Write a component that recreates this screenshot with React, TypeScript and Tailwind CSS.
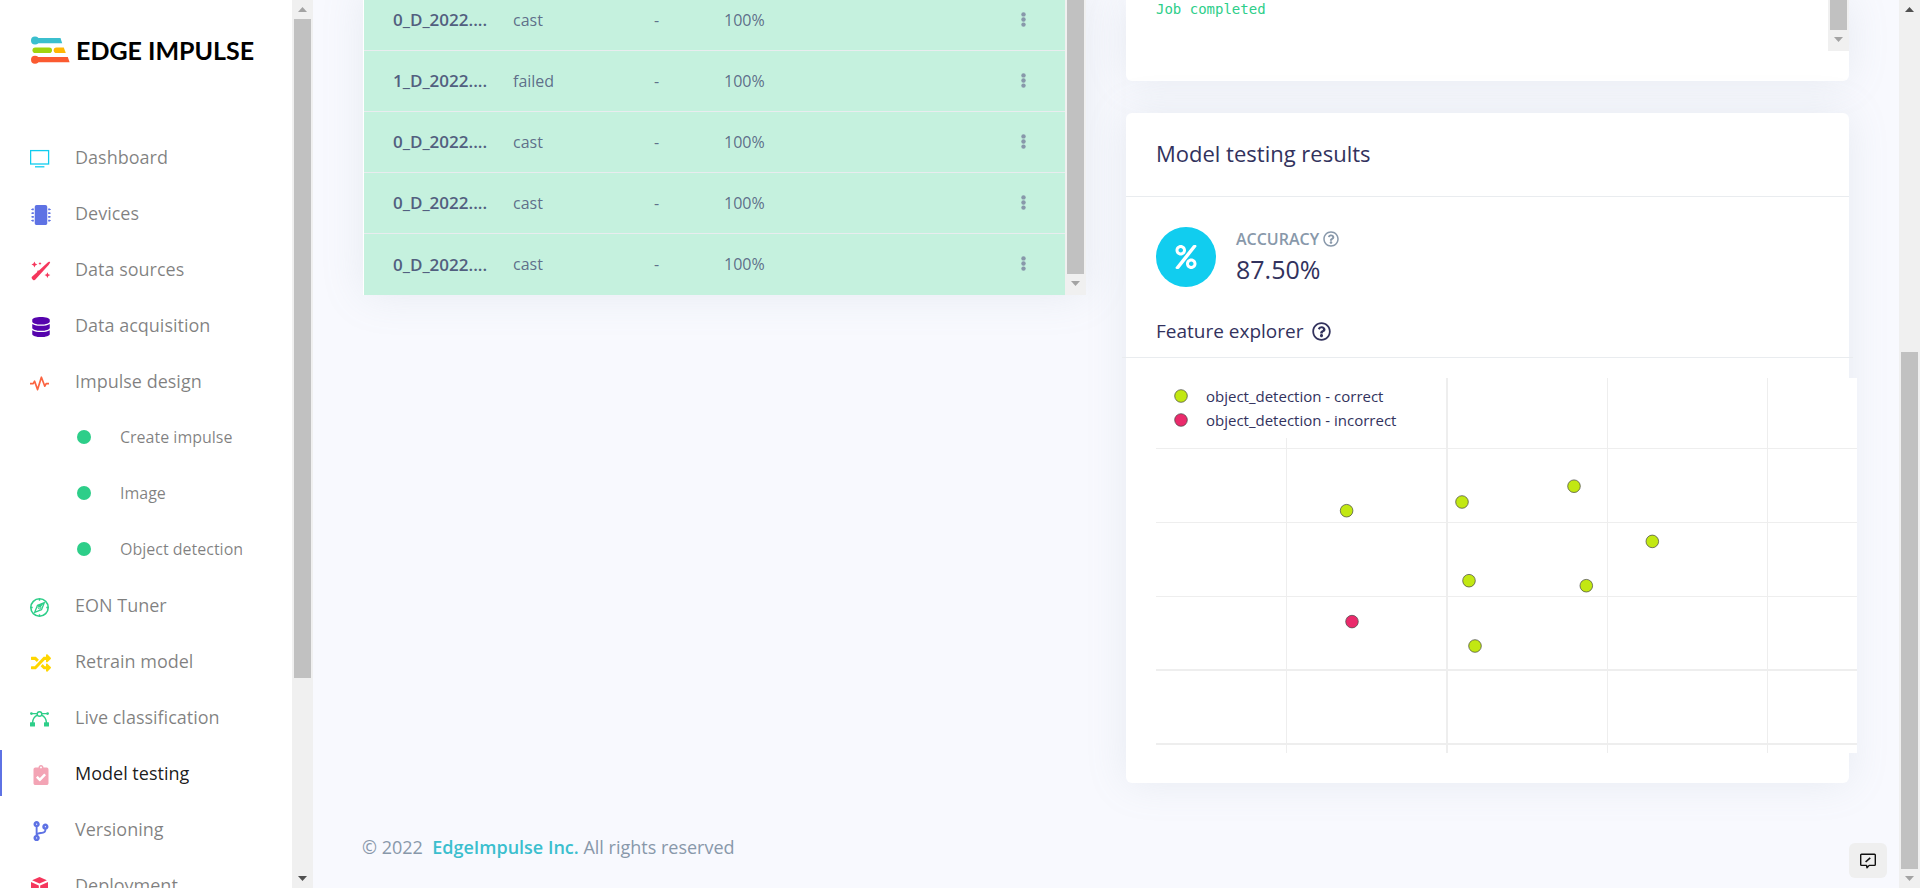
import React from 'react';
import {
  FaCodeBranch,
  FaClipboardCheck,
  FaDatabase,
  FaMicrochip,
  FaPercent,
  FaRandom,
  FaRegQuestionCircle,
} from 'react-icons/fa';

const ScreenIcon = () => (
  <svg viewBox="0 0 20 20" className="h-5 w-5 -ml-px" fill="none" stroke="#11cdef">
    <rect x="0.6" y="1.6" width="18" height="13.4" strokeWidth="1.3" />
    <path d="M5 17.8h9.4" strokeWidth="1.3" />
  </svg>
);

const WandIcon = () => (
  <svg viewBox="0 0 20 20" className="h-5 w-5" fill="#f5365c">
    <path d="M18.2.6l1 .9-1.6 2.4L4.4 18.6a1.7 1.7 0 01-2.5.1l-.7-.7a1.7 1.7 0 010-2.4L6 11.2l.6-1.6 1.4-.2 8.4-7.7z" />
    <path d="M3.4.6l.9 2 2 .9-2 .9-.9 2-.9-2-2-.9 2-.9z" />
    <path d="M9 1l.5 1.1 1.1.5-1.1.5L9 4.2l-.5-1.1-1.1-.5 1.1-.5z" />
    <path d="M16.4 11.2l.9 2 2 .9-2 .9-.9 2-.9-2-2-.9 2-.9z" />
  </svg>
);

const PulseIcon = () => (
  <svg viewBox="0 0 20 20" className="h-5 w-5 -ml-px" fill="none" stroke="#fb6340" strokeWidth="1.7">
    <path d="M0 10.6h3.2l1.4-2.4 3 8.4 3.8-12.4 3.4 9 1.4-2.6H19" strokeLinejoin="round" />
  </svg>
);

const CompassIcon = () => (
  <svg viewBox="0 0 20 20" className="h-5 w-5 -ml-px" fill="none" stroke="#2dce89">
    <circle cx="9.5" cy="10.5" r="8.7" strokeWidth="1.6" />
    <path d="M9.5 1.7v2M9.5 17.3v2M.7 10.5h2M16.3 10.5h2" strokeWidth="1.4" />
    <path d="M14.4 5.6l-2.8 7-7 2.8 2.8-7z" strokeWidth="1.3" strokeLinejoin="round" />
    <path d="M14.4 5.6l-7 2.8 2.6 2.6z" fill="#2dce89" stroke="none" />
    <circle cx="9.5" cy="10.5" r="1.4" strokeWidth="1" />
  </svg>
);

const CurveIcon = () => (
  <svg viewBox="0 0 20 20" className="h-5 w-5 -ml-px" fill="none" stroke="#2dce89" strokeWidth="1.4">
    <circle cx="9.5" cy="5" r="2.3" />
    <path d="M1.5 4.6h5.7M11.8 4.6h5.7" />
    <path d="M7.4 6.2C4.6 7.4 2.7 10 2.5 14M11.6 6.2c2.8 1.2 4.7 3.8 4.9 7.8" />
    <g fill="#2dce89" stroke="none">
      <circle cx="1.4" cy="4.6" r="1.4" />
      <circle cx="17.6" cy="4.6" r="1.4" />
      <rect x="0" y="13.2" width="5" height="4.4" rx="0.5" />
      <rect x="14" y="13.2" width="5" height="4.4" rx="0.5" />
    </g>
  </svg>
);

const BoxIcon = () => (
  <svg viewBox="0 0 20 20" className="h-5 w-5 -ml-px" fill="#f5365c">
    <path d="M9.5 0l7.4 3.2-7.4 3.4-7.4-3.4z" />
    <path d="M1 5l7.8 3.5v10.3L1 15.4zM18 5l-7.8 3.5v10.3l7.8-3.4z" />
  </svg>
);

interface NavEntry {
  label: string;
  icon?: React.ReactNode;
  sub?: boolean;
  active?: boolean;
}

const navItems: NavEntry[] = [
  { label: 'Dashboard', icon: <ScreenIcon /> },
  { label: 'Devices', icon: <FaMicrochip className="text-[#5e72e4]" /> },
  { label: 'Data sources', icon: <WandIcon /> },
  { label: 'Data acquisition', icon: <FaDatabase className="text-[#5603ad]" /> },
  { label: 'Impulse design', icon: <PulseIcon /> },
  { label: 'Create impulse', sub: true },
  { label: 'Image', sub: true },
  { label: 'Object detection', sub: true },
  { label: 'EON Tuner', icon: <CompassIcon /> },
  { label: 'Retrain model', icon: <FaRandom className="text-[#ffd600]" /> },
  { label: 'Live classification', icon: <CurveIcon /> },
  { label: 'Model testing', icon: <FaClipboardCheck className="text-[#f3a4b5]" />, active: true },
  { label: 'Versioning', icon: <FaCodeBranch className="text-[#5e72e4]" /> },
  { label: 'Deployment', icon: <BoxIcon /> },
];

const samples = [
  { id: 1, name: '0_D_2022....', label: 'cast', accuracy: '100%' },
  { id: 2, name: '1_D_2022....', label: 'failed', accuracy: '100%' },
  { id: 3, name: '0_D_2022....', label: 'cast', accuracy: '100%' },
  { id: 4, name: '0_D_2022....', label: 'cast', accuracy: '100%' },
  { id: 5, name: '0_D_2022....', label: 'cast', accuracy: '100%' },
];

const points = [
  { x: 190.6, y: 132.7, correct: true },
  { x: 306, y: 124, correct: true },
  { x: 418, y: 108.2, correct: true },
  { x: 496.3, y: 163.4, correct: true },
  { x: 313, y: 202.7, correct: true },
  { x: 430.3, y: 207.7, correct: true },
  { x: 196, y: 243.6, correct: false },
  { x: 319, y: 268, correct: true },
];

const Arrow = ({ up, dark }: { up?: boolean; dark?: boolean }) => (
  <svg viewBox="0 0 9 5" className="h-[5px] w-[9px] shrink-0" fill={dark ? '#505050' : '#a3a3a3'}>
    <path d={up ? 'M0 5h9L4.5 0z' : 'M0 0h9L4.5 5z'} />
  </svg>
);

const Logo = () => (
  <a href="#home" className="flex items-center gap-1.5 pl-[31px] pt-[34px]">
    <svg viewBox="0 0 39 28" className="h-7 w-[39px]">
      <circle cx="4" cy="4.5" r="4" fill="#3bbfce" />
      <path d="M4 2h25.5l1.7 5.2H4z" fill="#3bbfce" />
      <rect x="1.5" y="11.5" width="19.5" height="5.6" rx="2.8" fill="#a1d40d" />
      <path d="M25.5 11.5h7.3l2 5.6h-9.3a2.8 2.8 0 010-5.6z" fill="#ffb703" />
      <circle cx="4" cy="23.7" r="4" fill="#fb5a30" />
      <path d="M4 21h32.8l1.8 5.3H4z" fill="#fb5a30" />
    </svg>
    <span className="font-[Lato] text-[25px] leading-8 font-bold text-black">EDGE IMPULSE</span>
  </a>
);

const Sidebar = () => (
  <aside className="flex h-full w-[313px] shrink-0 bg-white">
    <div className="flex-1 overflow-hidden">
      <Logo />
      <nav className="mt-[63px]">
        {navItems.map((item) => (
          <a
            key={item.label}
            href={`#${item.label}`}
            className={
              item.sub
                ? 'flex h-14 items-center pl-[77px] text-base text-black/50'
                : item.active
                  ? 'relative flex h-14 items-center pl-[31px] text-lg text-black/90'
                  : 'flex h-14 items-center pl-[31px] text-lg text-black/50'
            }
          >
            {item.active && <span className="absolute inset-y-[5px] left-0 w-0.5 bg-[#5e72e4]" />}
            {item.sub ? (
              <span className="mr-[29px] h-3.5 w-3.5 rounded-full bg-[#2dce89]" />
            ) : (
              <span className="w-11 pt-1 text-xl">{item.icon}</span>
            )}
            <span>{item.label}</span>
          </a>
        ))}
      </nav>
    </div>
    <div className="flex w-[21px] flex-col items-center bg-[#f0f0f0] py-[7px]">
      <Arrow up />
      <div className="mt-[7px] h-[659px] w-[17px] bg-[#c1c1c1]" />
      <div className="flex-1" />
      <Arrow dark />
    </div>
  </aside>
);

const SampleList = () => (
  <section className="-mt-[11px] flex self-start border-l border-white bg-white shadow-[0_0_40px_0_rgba(136,152,170,0.15)]">
    <table className="flex-1 table-fixed border-collapse bg-[#c5f1de] text-base text-[#525f7f]">
      <tbody>
        {samples.map((s) => (
          <tr key={s.id} className="h-[61px] border-t border-[#e9ecef]">
            <td className="w-[149px] pl-[29px] text-[17px] font-semibold">{s.name}</td>
            <td className="w-[141px] text-[#525f7f]/90">{s.label}</td>
            <td className="w-[70px] text-[#525f7f]/90">-</td>
            <td className="text-[#525f7f]/90">{s.accuracy}</td>
            <td className="w-[84px] text-center">
              <button aria-label="Sample actions" className="pb-1 align-middle">
                <svg viewBox="0 0 5 15" className="h-[15px] w-[5px]" fill="#8898aa">
                  <circle cx="2.5" cy="2.4" r="2.2" />
                  <circle cx="2.5" cy="7.5" r="2.2" />
                  <circle cx="2.5" cy="12.6" r="2.2" />
                </svg>
              </button>
            </td>
          </tr>
        ))}
      </tbody>
    </table>
    <div className="flex w-[21px] flex-col items-center bg-[#f0f0f0] pb-[9px]">
      <div className="mb-[7px] w-[17px] flex-1 bg-[#c1c1c1]" />
      <Arrow />
    </div>
  </section>
);

const JobLog = () => (
  <section className="rounded-b-md bg-white pb-[30px] shadow-[0_0_40px_0_rgba(136,152,170,0.15)]">
    <div className="flex h-[51px] justify-between">
      <pre className="pl-[30px] font-['DejaVu_Sans_Mono',monospace] text-sm leading-[18px] text-[#2dce89]">Job completed</pre>
      <div className="flex w-[21px] flex-col items-center bg-[#f0f0f0] pb-[9px]">
        <div className="mb-[7px] w-[17px] flex-1 bg-[#c1c1c1]" />
        <Arrow />
      </div>
    </div>
  </section>
);

const FeatureChart = () => (
  <svg className="-mr-[38px] block h-[375px] w-[calc(100%+38px)] bg-white">
    <g stroke="#eeeeee">
      <path d="M130.5 0v375M451.5 0v375M611.5 0v375" />
      <path d="M291 0v375" strokeWidth="2" />
      <line x1="0" x2="100%" y1="70.5" y2="70.5" />
      <line x1="0" x2="100%" y1="144.5" y2="144.5" />
      <line x1="0" x2="100%" y1="218.5" y2="218.5" />
      <line x1="0" x2="100%" y1="292" y2="292" strokeWidth="2" />
      <line x1="0" x2="100%" y1="366" y2="366" strokeWidth="2" />
    </g>
    <rect x="8" y="0" width="245" height="60" fill="#fff" />
    <g stroke="#444" strokeOpacity="0.7">
      <circle cx="25" cy="18" r="6.3" fill="#c2e812" />
      <circle cx="25" cy="42" r="6.3" fill="#ea2a6b" />
      {points.map((p) => (
        <circle key={p.x} cx={p.x} cy={p.y} r="6.3" fill={p.correct ? '#c2e812' : '#ea2a6b'} />
      ))}
    </g>
    <g fill="#32325d" fontSize="15">
      <text x="50" y="24">object_detection - correct</text>
      <text x="50" y="48">object_detection - incorrect</text>
    </g>
  </svg>
);

const TestingResults = () => (
  <section className="mt-8 rounded-md bg-white pb-[30px] text-[#32325d] shadow-[0_0_40px_0_rgba(136,152,170,0.15)]">
    <h3 className="flex h-[84px] items-center border-b border-[#e9ecef] px-[30px] pb-0.5 text-[22px]">
      Model testing results
    </h3>
    <div className="px-[30px] pt-[30px]">
      <div className="flex gap-5">
        <div className="flex h-[60px] w-[60px] items-center justify-center rounded-full bg-[#11cdef] text-white">
          <FaPercent className="h-6 w-6" />
        </div>
        <div>
          <div className="flex h-6 items-center gap-1 text-base font-semibold text-[#8898aa]">
            ACCURACY
            <FaRegQuestionCircle />
          </div>
          <div className="text-[25px] leading-9">87.50%</div>
        </div>
      </div>
      <h4 className="mt-7 flex h-8 items-center gap-2 text-[19px]">
        Feature explorer
        <FaRegQuestionCircle />
      </h4>
    </div>
    <hr className="-mx-1 mt-[10px] mb-5 border-[#e9ecef]" />
    <div className="px-[30px]">
      <FeatureChart />
    </div>
  </section>
);

export default function App() {
  return (
    <div className="flex h-screen overflow-hidden bg-[#f8f9fe] font-['Open_Sans',sans-serif]">
      <Sidebar />
      <main className="min-w-0 flex-1 px-[50px]">
        <div className="grid grid-cols-2 gap-10">
          <SampleList />
          <div className="min-w-0">
            <JobLog />
            <TestingResults />
          </div>
        </div>
        <footer className="mt-[50px] -ml-px text-lg leading-7 text-[#8898aa]">
          © 2022 &nbsp;
          <a href="#edgeimpulse" className="font-semibold text-[#3bbfce]">
            EdgeImpulse Inc.
          </a>{' '}
          All rights reserved
        </footer>
      </main>
      <div className="flex w-[21px] shrink-0 flex-col items-center bg-[#f0f0f0] pt-[7px] pb-[7px]">
        <Arrow up dark />
        <div className="flex-1" />
        <div className="mb-[7px] h-[517px] w-[17px] bg-[#c1c1c1]" />
        <Arrow />
      </div>
      <button
        aria-label="Give feedback"
        className="fixed right-[33px] bottom-[10px] flex h-[35px] w-[38px] items-center justify-center rounded-md bg-[#efefef]"
      >
        <svg viewBox="0 0 16 16" className="h-4 w-4" fill="none" stroke="#111" strokeWidth="1.4">
          <path d="M1.5 1.2h13a.8.8 0 01.8.8v9.6a.8.8 0 01-.8.8H9.2L7 14.8l-.4-2.4H1.5a.8.8 0 01-.8-.8V2a.8.8 0 01.8-.8z" strokeLinejoin="round" />
          <path d="M5.6 9l4.6-4.2" strokeWidth="1.6" />
        </svg>
      </button>
    </div>
  );
}
